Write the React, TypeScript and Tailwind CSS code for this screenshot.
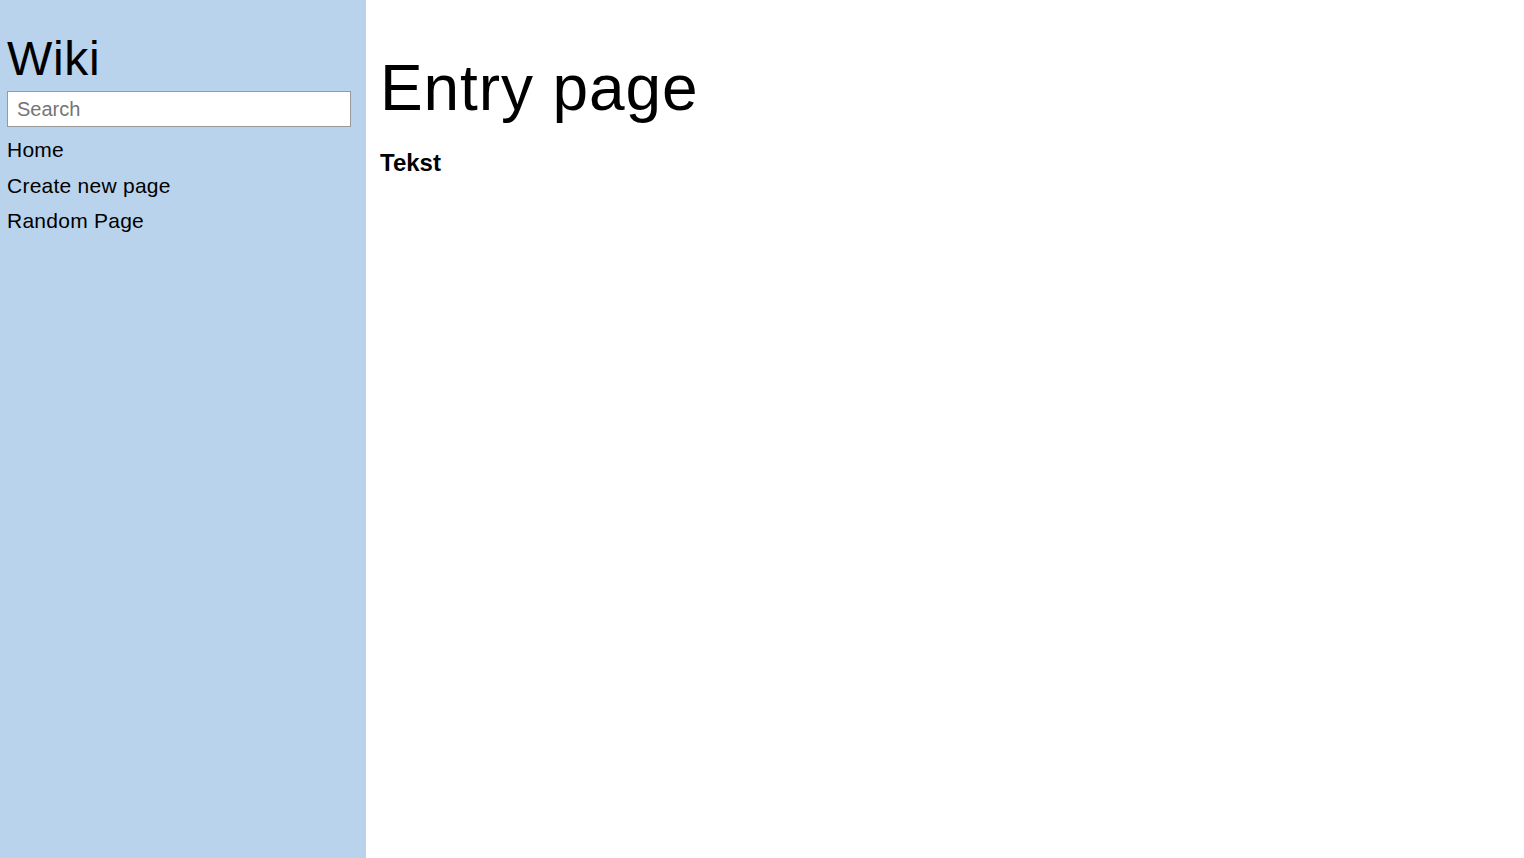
import React from 'react';

const links = ['Home', 'Create new page', 'Random Page'];

const App = () => {
  return (
    <div className="flex min-h-screen w-full bg-white text-black font-['Liberation_Sans',Arial,sans-serif]">
      {/* Sidebar */}
      <aside className="w-[366px] shrink-0 bg-[#b9d3ec] pl-[7px] pt-[35px]">
        <h1 className="text-[48px] leading-[48px] tracking-[0.7px]">Wiki</h1>
        <input
          type="text"
          placeholder="Search"
          className="mt-[8px] block h-[36px] w-[344px] border border-[#999] bg-white pl-[9px] pt-[1px] text-[20px] text-black placeholder:text-[#757575] outline-none"
        />
        <ul className="mt-[5px]">
          {links.map((l) => (
            <li key={l} className="text-[21px] leading-[35.5px] tracking-[0.25px]">
              <a href="#">{l}</a>
            </li>
          ))}
        </ul>
      </aside>

      {/* Content */}
      <main className="flex-1 pl-[14px] pt-[56px]">
        <h1 className="text-[64px] leading-[64px] tracking-[0.9px]">Entry page</h1>
        <h2 className="mt-[31px] text-[24px] leading-[24px] font-bold">Tekst</h2>
      </main>
    </div>
  );
};

export default App;
